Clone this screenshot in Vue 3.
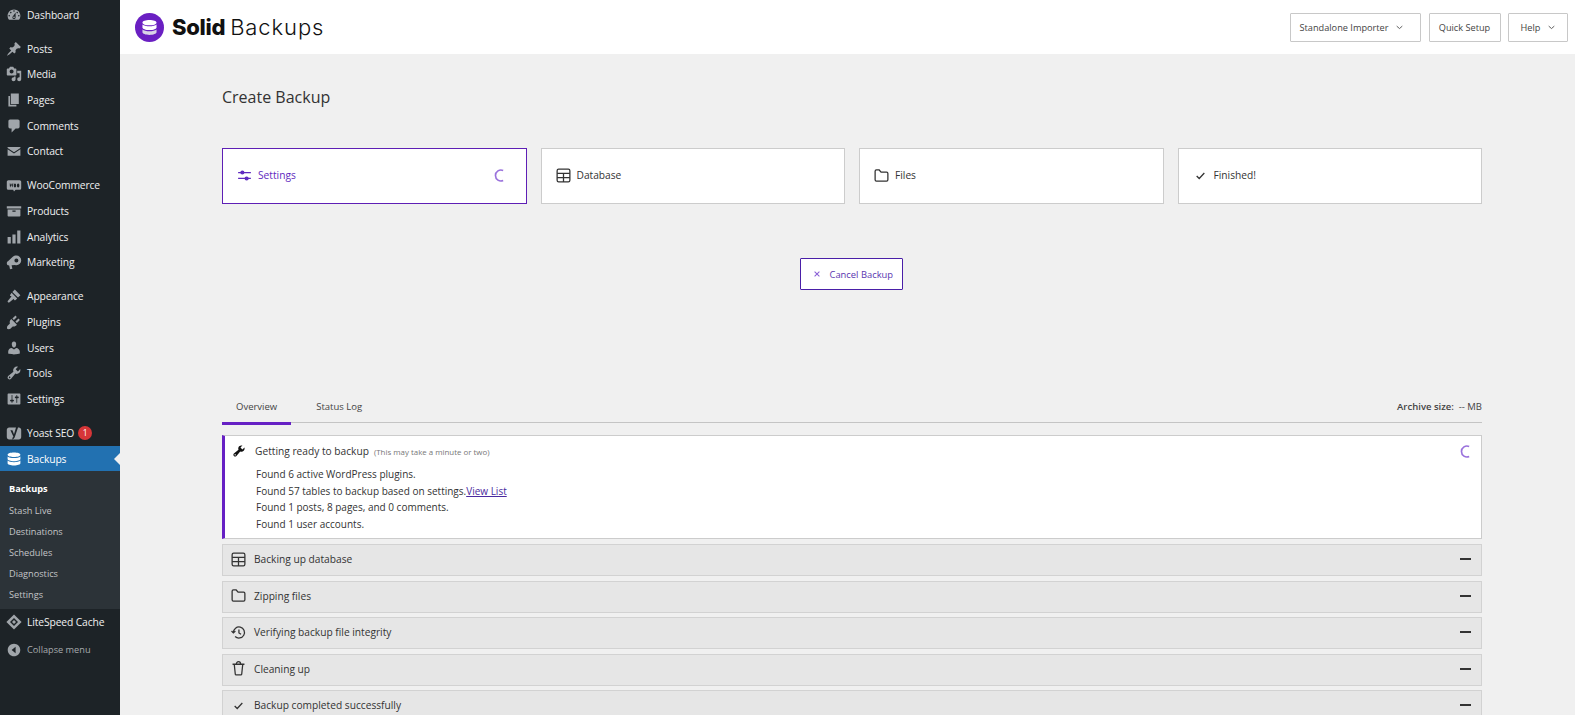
<script setup>
import { ref } from 'vue'

// Dashicons-style paths, 20x20
const icons = {
  dashboard: 'M3.76 16h12.48c1.1-1.37 1.76-3.11 1.76-5 0-4.42-3.58-8-8-8s-8 3.58-8 8c0 1.89.66 3.63 1.76 5zM10 4c.55 0 1 .45 1 1s-.45 1-1 1-1-.45-1-1 .45-1 1-1zM6 6c.55 0 1 .45 1 1s-.45 1-1 1-1-.45-1-1 .45-1 1-1zm8 0c.55 0 1 .45 1 1s-.45 1-1 1-1-.45-1-1 .45-1 1-1zm-5.37 5.55L12 7v6c0 1.1-.9 2-2 2s-2-.9-2-2c0-.57.24-1.08.63-1.45zM4 10c.55 0 1 .45 1 1s-.45 1-1 1-1-.45-1-1 .45-1 1-1zm12 0c.55 0 1 .45 1 1s-.45 1-1 1-1-.45-1-1 .45-1 1-1zm-5 3c0-.55-.45-1-1-1s-1 .45-1 1 .45 1 1 1 1-.45 1-1z',
  post: 'M10.44 3.02l1.82-1.82 6.36 6.35-1.83 1.82c-1.05-.68-2.48-.57-3.41.36l-.75.75c-.92.93-1.04 2.35-.35 3.41l-1.83 1.82-2.41-2.41-2.8 2.79c-.42.42-3.38 2.71-3.8 2.29s1.86-3.39 2.28-3.81l2.79-2.79L4.1 9.36l1.83-1.82c1.05.69 2.48.57 3.4-.36l.75-.75c.93-.92 1.05-2.35.36-3.41z',
  media: 'M13 11V4c0-.55-.45-1-1-1h-1.67L9 1H5L3.67 3H2c-.55 0-1 .45-1 1v7c0 .55.45 1 1 1h10c.55 0 1-.45 1-1zM7 4.5c1.38 0 2.5 1.12 2.5 2.5S8.38 9.5 7 9.5 4.5 8.38 4.5 7 5.62 4.5 7 4.5zM14 6h5v10.5c0 1.38-1.12 2.5-2.5 2.5S14 17.88 14 16.5s1.12-2.5 2.5-2.5c.17 0 .34.02.5.05V9h-3V6zm-4 8.05V13h2v3.5c0 1.38-1.12 2.5-2.5 2.5S7 17.88 7 16.5 8.12 14 9.5 14c.17 0 .34.02.5.05z',
  page: 'M6 15V2h10v13H6zm-1 1h8v2H3V5h2v11z',
  comments: 'M5 2h10c1.1 0 2 .9 2 2v7c0 1.1-.9 2-2 2h-3l-5 5v-5H5c-1.1 0-2-.9-2-2V4c0-1.1.9-2 2-2z',
  mail: 'M2 5h16v1.2l-8 5.3-8-5.3V5zm0 2.8V16h16V7.8l-8 5.3-8-5.3z',
  woo: 'M3 4h14c1.1 0 2 .9 2 2v8c0 1.1-.9 2-2 2h-5l-2 2-1-2H3c-1.1 0-2-.9-2-2V6c0-1.1.9-2 2-2zm1.2 4 1 5 1.5-3 1.3 3 1.2-5H8l-.5 2.5L6.5 8h-.7l-1 2.5L4.6 8h-.4zm7 0c-1 0-1.5 1.1-1.5 2.5s.5 2.5 1.5 2.5 1.5-1.1 1.5-2.5-.5-2.500-1.500-2.500zm4 0c-1 0-1.500 1.100-1.500 2.500s.5 2.500 1.500 2.500 1.500-1.100 1.500-2.500S16.200 8 15.200 8z',
  archive: 'M19 4H1v3h18V4zM2 8v8c0 .55.45 1 1 1h14c.55 0 1-.45 1-1V8H2zm10 3H8V9.500h4V11z',
  bars: 'M18 18V2h-4v16h4zm-6 0V7H8v11h4zm-6 0v-8H2v8h4z',
  megaphone: 'M13 2a6 6 0 1 1 0 12c-.6 0-1.200-.1-1.700-.3L7 14l1 4.500-3 .5-1-4.500-1.500-.5C1.500 13.500 1 12.500 1 11.500s.5-2 1.500-2.500L8.500 3.500C9.600 2.500 11.200 2 13 2zm0 3.500a2.500 2.500 0 1 0 0 5 2.500 2.500 0 1 0 0-5z',
  brush: 'M11 2l7 7-3 3-7-7 3-3zM7 6l7 7-2 2c-1 .8-2 .5-2-.5 0-.6-.5-.9-1-.5L4 18c-.8.8-2.600-.9-1.800-1.800L6.500 11c.4-.5 0-1-.5-1-1 0-1.300-1-.5-2L7 6z',
  plugin: 'M13.110 4.360L9.870 7.600 8 5.730l3.240-3.240c.35-.34 1.050-.25 1.540.24.49.49.58 1.190.33 1.630zm3.720 3.720L13.600 11.320l-1.870-1.870 3.240-3.240c.44-.25 1.140-.16 1.630.33s.58 1.190.23 1.540zM6.600 6.300l7.100 7.100c-1.400 1.800-3.400 2.700-5.300 2.100l-3.300 3.300c-.5.100-2.900.4-3.700-.4-.4-.7 0-3 .4-3.400l3.100-3.200c-.7-2-.100-4.100 1.700-5.500z',
  user: 'M10 9.250c-2.270 0-2.730-3.440-2.730-3.440C7 4.020 7.820 2 9.970 2c2.160 0 2.980 2.020 2.710 3.810 0 0-.41 3.440-2.680 3.440zm0 2.570L12.720 10c2.390 0 4.520 2.330 4.520 4.530v2.490s-3.650 1.130-7.240 1.130c-3.650 0-7.240-1.130-7.240-1.130v-2.490c0-2.250 1.940-4.480 4.470-4.480z',
  wrench: 'M16.680 9.770c-1.340 1.340-3.300 1.670-4.950.99l-5.410 6.520c-.99.99-2.590.99-3.580 0s-.99-2.590 0-3.570l6.520-5.420c-.68-1.650-.35-3.610.99-4.950 1.280-1.280 3.120-1.620 4.720-1.060l-2.890 2.890 2.820 2.820 2.860-2.870c.53 1.580.18 3.410-1.080 4.650zM3.810 16.210c.4.39 1.040.39 1.430 0 .4-.4.4-1.040 0-1.440-.39-.39-1.030-.39-1.430 0-.39.4-.39 1.040 0 1.440z',
  sliders: 'M18 16V4c0-.55-.45-1-1-1H3c-.55 0-1 .45-1 1v12c0 .55.45 1 1 1h14c.55 0 1-.45 1-1zM8 11h1c.55 0 1 .45 1 1s-.45 1-1 1H8v1.500c0 .28-.22.5-.5.5s-.5-.22-.5-.5V13H6c-.55 0-1-.45-1-1s.45-1 1-1h1V5.500c0-.28.22-.5.5-.5s.5.22.5.5V11zm5-2h-1c-.55 0-1-.45-1-1s.45-1 1-1h1V5.500c0-.28.22-.5.5-.5s.5.22.5.5V7h1c.55 0 1 .45 1 1s-.45 1-1 1h-1v5.500c0 .28-.22.5-.5.5s-.5-.22-.5-.5V9z',
  yoast: 'M4 3h12c1.700 0 3 1.300 3 3v9c0 1.700-1.300 3-3 3H4c-1.700 0-3-1.300-3-3V6c0-1.700 1.300-3 3-3zM5.500 6.500H8l2 5 2.500-8.500h2.500L11 15c-.5 1.500-1.300 2.500-3 3v-2c.7-.3 1-.8 1.200-1.500z',
  database: 'M10 2c4.400 0 8 1.100 8 2.800S14.400 7.600 10 7.600 2 6.500 2 4.800 5.600 2 10 2zM2 6.800c1.500 1.300 4.600 2 8 2s6.500-.7 8-2V10c0 1.600-3.600 2.800-8 2.800S2 11.600 2 10V6.800zm0 5.200c1.500 1.300 4.600 2 8 2s6.500-.7 8-2v3.200c0 1.600-3.600 2.800-8 2.800s-8-1.200-8-2.800V12z',
  litespeed: 'M10 .5L19.500 10 10 19.500.5 10 10 .5zm0 4.500L5 10l5 5 5-5-5-5zm0 2.500l2.500 2.500-2.500 2.500L7.500 10 10 7.500z',
  collapse: 'M10 2.160c4.330 0 7.840 3.510 7.840 7.840s-3.510 7.840-7.840 7.840S2.160 14.330 2.160 10 5.670 2.160 10 2.160zM12 14V6l-5 4 5 4z'
}

// Hauptmenü, in Gruppen wegen der Abstände
const menuGroups = [
  [{ label: 'Dashboard', icon: 'dashboard' }],
  [
    { label: 'Posts', icon: 'post' },
    { label: 'Media', icon: 'media' },
    { label: 'Pages', icon: 'page' },
    { label: 'Comments', icon: 'comments' },
    { label: 'Contact', icon: 'mail' }
  ],
  [
    { label: 'WooCommerce', icon: 'woo' },
    { label: 'Products', icon: 'archive' },
    { label: 'Analytics', icon: 'bars' },
    { label: 'Marketing', icon: 'megaphone' }
  ],
  [
    { label: 'Appearance', icon: 'brush' },
    { label: 'Plugins', icon: 'plugin' },
    { label: 'Users', icon: 'user' },
    { label: 'Tools', icon: 'wrench' },
    { label: 'Settings', icon: 'sliders' }
  ]
]

const subMenu = ['Backups', 'Stash Live', 'Destinations', 'Schedules', 'Diagnostics', 'Settings']

const steps = [
  { label: 'Settings', icon: 'sliders', active: true },
  { label: 'Database', icon: 'table' },
  { label: 'Files', icon: 'folder' },
  { label: 'Finished!', icon: 'check' }
]

const rows = [
  { label: 'Backing up database', icon: 'table' },
  { label: 'Zipping files', icon: 'folder' },
  { label: 'Verifying backup file integrity', icon: 'history' },
  { label: 'Cleaning up', icon: 'trash' },
  { label: 'Backup completed successfully', icon: 'check' }
]

const activeTab = ref('Overview')
</script>

<template>
  <div class="page">
    <aside class="sidebar">
      <ul v-for="(group, i) in menuGroups" :key="i" class="menu-group">
        <li v-for="item in group" :key="item.label" class="menu-item">
          <svg class="menu-icon" viewBox="0 0 20 20"><path :d="icons[item.icon]" fill-rule="evenodd" /></svg>
          <span>{{ item.label }}</span>
        </li>
      </ul>

      <ul class="menu-group last">
        <li class="menu-item">
          <svg class="menu-icon" viewBox="0 0 20 20"><path :d="icons.yoast" fill-rule="evenodd" /></svg>
          <span>Yoast SEO</span>
          <span class="badge">1</span>
        </li>
        <li class="menu-item current">
          <svg class="menu-icon" viewBox="0 0 20 20"><path :d="icons.database" /></svg>
          <span>Backups</span>
        </li>
      </ul>

      <ul class="submenu">
        <li v-for="(sub, i) in subMenu" :key="sub" :class="{ on: i === 0 }">{{ sub }}</li>
      </ul>

      <ul>
        <li class="menu-item">
          <svg class="menu-icon" viewBox="0 0 20 20"><path :d="icons.litespeed" fill-rule="evenodd" /></svg>
          <span>LiteSpeed Cache</span>
        </li>
        <li class="menu-item collapse">
          <svg class="menu-icon" viewBox="0 0 20 20"><path :d="icons.collapse" fill-rule="evenodd" /></svg>
          <span>Collapse menu</span>
        </li>
      </ul>
    </aside>

    <div class="main">
      <header class="topbar">
        <div class="logo">
          <svg class="logo-mark" viewBox="0 0 28 28">
            <circle cx="14" cy="14" r="14" fill="#6a1fc2" />
            <path d="M14 6.800c3.700 0 6.800 1 6.800 2.500S17.700 11.800 14 11.800 7.200 10.800 7.200 9.300 10.300 6.800 14 6.800zM7.200 11.200c1.300 1.100 3.900 1.700 6.800 1.700s5.500-.6 6.800-1.700v2.800c0 1.400-3.100 2.500-6.800 2.500S7.200 15.400 7.200 14v-2.800z" fill="#fff" />
            <path d="M7.200 15.900c1.300 1.100 3.900 1.700 6.800 1.700s5.500-.6 6.800-1.700v2.800c0 1.400-3.100 2.500-6.800 2.500s-6.800-1.100-6.800-2.500v-2.800z" fill="#d9d4e6" />
          </svg>
          <span class="logo-text"><b>Solid</b><span>Backups</span></span>
        </div>
        <div class="top-actions">
          <button class="top-btn wide">
            Standalone Importer
            <svg class="chev" viewBox="0 0 10 6"><path d="M1 1l4 3.500L9 1" /></svg>
          </button>
          <button class="top-btn quick">Quick Setup</button>
          <button class="top-btn help">
            Help
            <svg class="chev" viewBox="0 0 10 6"><path d="M1 1l4 3.500L9 1" /></svg>
          </button>
        </div>
      </header>

      <main class="content">
        <h1 class="title">Create Backup</h1>

        <!-- Schritte oben -->
        <div class="steps">
          <div v-for="step in steps" :key="step.label" class="step" :class="{ active: step.active }">
            <svg class="line-icon" viewBox="0 0 20 20">
              <template v-if="step.icon === 'sliders'">
                <path d="M2.500 6.500h15M2.500 13.500h15" />
                <circle cx="7.500" cy="6.500" r="1.700" fill="currentColor" />
                <circle cx="12.500" cy="13.500" r="1.700" fill="currentColor" />
              </template>
              <template v-else-if="step.icon === 'table'">
                <rect x="2.500" y="2.500" width="15" height="15" rx="1.800" />
                <path d="M2.500 7.500h15M2.500 12.500h15M10 7.500v10" />
              </template>
              <path v-else-if="step.icon === 'folder'" d="M2.500 5c0-1 .6-1.500 1.500-1.500h3.300l2.200 2.500h6.500c1 0 1.500.6 1.500 1.500V15c0 1-.5 1.500-1.500 1.500H4c-.9 0-1.500-.5-1.500-1.500V5z" />
              <path v-else d="M5.500 10.500l3 3 6-6.500" />
            </svg>
            <span>{{ step.label }}</span>
            <svg v-if="step.active" class="spinner" viewBox="0 0 12 16"><path d="M10 2.500A6 6 0 1 0 10 13.500" /></svg>
          </div>
        </div>

        <div class="cancel-wrap">
          <button class="cancel">
            <svg class="cancel-x" viewBox="0 0 10 10"><path d="M2 2l6 6M8 2l-6 6" /></svg>
            Cancel Backup
          </button>
        </div>

        <!-- Tabs -->
        <div class="tabs">
          <span class="tab" :class="{ on: activeTab === 'Overview' }">Overview</span>
          <span class="tab" :class="{ on: activeTab === 'Status Log' }">Status Log</span>
          <span class="archive"><b>Archive size:</b>&nbsp; -- MB</span>
        </div>

        <section class="current-box">
          <div class="box-head">
            <svg class="wrench" viewBox="0 0 20 20"><path :d="icons.wrench" /></svg>
            <strong>Getting ready to backup</strong>
            <small>(This may take a minute or two)</small>
            <svg class="spinner box-spinner" viewBox="0 0 12 16"><path d="M10 2.500A6 6 0 1 0 10 13.500" /></svg>
          </div>
          <p>Found 6 active WordPress plugins.</p>
          <p>Found 57 tables to backup based on settings.<a href="#">View List</a></p>
          <p>Found 1 posts, 8 pages, and 0 comments.</p>
          <p>Found 1 user accounts.</p>
        </section>

        <div class="rows">
          <div v-for="row in rows" :key="row.label" class="row">
            <svg class="line-icon" viewBox="0 0 20 20">
              <template v-if="row.icon === 'table'">
                <rect x="2.500" y="2.500" width="15" height="15" rx="1.800" />
                <path d="M2.500 7.500h15M2.500 12.500h15M10 7.500v10" />
              </template>
              <path v-else-if="row.icon === 'folder'" d="M2.500 5c0-1 .6-1.500 1.500-1.500h3.300l2.200 2.500h6.500c1 0 1.500.6 1.500 1.500V15c0 1-.5 1.500-1.500 1.500H4c-.9 0-1.500-.5-1.500-1.500V5z" />
              <template v-else-if="row.icon === 'history'">
                <path d="M4 10a6.500 6.500 0 1 1 2 4.700" />
                <path d="M1.800 8.200L4 10.500l2.300-2.200M10.500 6.500v4l2.500 1.500" />
              </template>
              <path v-else-if="row.icon === 'trash'" d="M3 5h14M5 5l1.200 11.500c.1.600.5.900 1 .9h5.600c.5 0 .9-.3 1-.9L15 5M7.500 5c0-1.800 1-3 2.500-3s2.500 1.200 2.500 3" />
              <path v-else d="M5.500 10.500l3 3 6-6.500" />
            </svg>
            <span>{{ row.label }}</span>
            <i class="dash"></i>
          </div>
        </div>
      </main>
    </div>
  </div>
</template>

<style>
html, body {
  margin: 0;
  height: 715px;
  overflow: hidden;
  background: #f0f0f0;
}
</style>

<style scoped>
.page {
  display: flex;
  height: 715px;
  overflow: hidden;
  font-family: "Open Sans", "Noto Sans", sans-serif;
  color: #2b2b2b;
}

ul {
  list-style: none;
  margin: 0;
  padding: 0;
}

/* Sidebar */
.sidebar {
  width: 120px;
  flex: none;
  background: #1d2327;
  padding-top: 2px;
  font-size: 10.3px;
  letter-spacing: -0.12px;
  color: #f0f0f1;
}

.menu-group {
  margin-bottom: 8.4px;
}

.menu-group.last {
  margin-bottom: 0;
}

.menu-item {
  position: relative;
  display: flex;
  align-items: center;
  height: 25.65px;
  padding-left: 5.5px;
}

.menu-icon {
  width: 16px;
  height: 16px;
  flex: none;
  margin-right: 5.5px;
  fill: #a0a5aa;
}

.current {
  background: #2271b1;
  color: #fff;
}

.current .menu-icon {
  fill: #fff;
}

/* kleiner Pfeil zum Inhalt */
.current::after {
  content: "";
  position: absolute;
  right: 0;
  top: 7px;
  border: 6px solid transparent;
  border-right-color: #f0f0f0;
  border-left: 0;
}

.badge {
  width: 14px;
  height: 14px;
  margin-left: 4px;
  border-radius: 50%;
  background: #d63638;
  color: #fff;
  font-size: 8.5px;
  line-height: 14px;
  text-align: center;
}

.submenu {
  background: #2c3338;
  padding: 7px 0 3.5px;
  font-size: 9.2px;
  letter-spacing: 0;
  color: #c3c4c7;
}

.submenu li {
  height: 21.2px;
  line-height: 21.2px;
  padding-left: 9px;
}

.submenu .on {
  color: #fff;
  font-weight: 700;
}

.collapse {
  margin-top: 2px;
  color: #a7aaad;
  font-size: 9.2px;
  letter-spacing: 0;
}

/* Topbar */
.main {
  flex: 1;
  min-width: 0;
}

.topbar {
  display: flex;
  align-items: center;
  justify-content: space-between;
  height: 54px;
  padding: 0 7px 0 15px;
  background: #fff;
}

.logo {
  display: flex;
  align-items: center;
  gap: 8px;
}

.logo-mark {
  width: 29px;
  height: 29px;
}

.logo-text {
  display: flex;
  gap: 5px;
  font-family: Inter, sans-serif;
  font-size: 22px;
  letter-spacing: -0.3px;
  color: #111;
}

.logo-text b {
  font-weight: 800;
}

.logo-text span {
  font-weight: 300;
  letter-spacing: 0.9px;
}

.top-actions {
  display: flex;
  gap: 7.5px;
}

.top-btn {
  display: flex;
  align-items: center;
  justify-content: center;
  gap: 8px;
  height: 29px;
  padding: 0;
  border: 1px solid #c8c8c8;
  border-radius: 1px;
  background: #fff;
  font-family: inherit;
  font-size: 9.2px;
  color: #444;
}

.top-btn.wide {
  width: 131px;
  padding-right: 8px;
}

.top-btn.quick {
  width: 72px;
}

.top-btn.help {
  width: 60px;
}

.chev {
  width: 7px;
  height: 5px;
  fill: none;
  stroke: #444;
  stroke-width: 1.2;
}

/* Inhalt */
.content {
  padding: 0 93px 0 102px;
}

.title {
  margin: 0;
  padding-top: 32px;
  font-size: 16px;
  font-weight: 400;
  line-height: 22px;
  color: #333;
}

.steps {
  display: grid;
  grid-template-columns: repeat(4, 1fr);
  gap: 14px;
  margin-top: 40px;
}

.step {
  display: flex;
  align-items: center;
  height: 56px;
  box-sizing: border-box;
  padding: 0 21px 2px 13px;
  border: 1px solid #ccc;
  background: #fff;
  font-size: 10.2px;
  color: #333;
}

.step.active {
  border-color: #5e1fb5;
  color: #5f2ac0;
}

.line-icon {
  width: 17px;
  height: 17px;
  flex: none;
  margin-right: 5px;
  fill: none;
  stroke: currentColor;
  stroke-width: 1.5;
}

.spinner {
  width: 11px;
  height: 15px;
  margin-left: auto;
  fill: none;
  stroke: #9a72dc;
  stroke-width: 1.8;
}

.cancel-wrap {
  display: flex;
  justify-content: center;
  margin: 54px 0 0 -2px;
}

.cancel {
  display: flex;
  align-items: center;
  gap: 9px;
  width: 103px;
  height: 32px;
  padding: 0 0 0 12px;
  border: 1px solid #4a1fa8;
  border-radius: 1px;
  background: #fff;
  font-family: inherit;
  font-size: 9.4px;
  color: #5a35b0;
}

.cancel-x {
  width: 8px;
  height: 8px;
  fill: none;
  stroke: #8a5fd6;
  stroke-width: 1.3;
}

/* Tabs */
.tabs {
  display: flex;
  align-items: center;
  height: 32px;
  margin-top: 100px;
  border-bottom: 1px solid #c4c4c4;
  font-size: 9.5px;
}

.tab {
  position: relative;
  display: flex;
  align-items: center;
  height: 100%;
  padding: 0 14px;
  margin-right: 11px;
  color: #444;
}

.tab.on::after {
  content: "";
  position: absolute;
  left: 0;
  right: 0;
  bottom: -3px;
  height: 3px;
  background: #6620c4;
}

.archive {
  margin-left: auto;
  color: #444;
}

.archive b {
  font-weight: 600;
}

/* Aktiver Schritt */
.current-box {
  margin-top: 12px;
  height: 104px;
  box-sizing: border-box;
  padding: 5px 10px 0 30px;
  border: 1px solid #ccc;
  border-left: 3px solid #6620c4;
  background: #fff;
  font-size: 10px;
  color: #333;
}

.box-head {
  position: relative;
  display: flex;
  align-items: baseline;
  gap: 5px;
  height: 25px;
  line-height: 20px;
  font-size: 10.2px;
}

.box-head strong {
  font-weight: 400;
}

.box-head small {
  font-size: 7.9px;
  color: #777;
}

.wrench {
  position: absolute;
  left: -23px;
  top: 3px;
  width: 14px;
  height: 14px;
  fill: #111;
}

.box-spinner {
  position: absolute;
  right: 0;
  top: 3px;
}

.current-box p {
  margin: 0;
  line-height: 16.5px;
  padding-left: 1px;
}

.current-box a {
  color: #4a2aa0;
}

/* Zugeklappte Zeilen */
.rows {
  display: flex;
  flex-direction: column;
  gap: 4.6px;
  margin-top: 5px;
}

.row {
  display: flex;
  align-items: center;
  height: 32px;
  flex: none;
  box-sizing: border-box;
  padding: 0 10px 2px 7px;
  border: 1px solid #d2d2d2;
  background: #e6e6e6;
  font-size: 10.2px;
  color: #333;
}

.row .line-icon {
  margin-right: 7px;
}

.dash {
  width: 11px;
  height: 2px;
  margin-left: auto;
  background: #333;
}
</style>
